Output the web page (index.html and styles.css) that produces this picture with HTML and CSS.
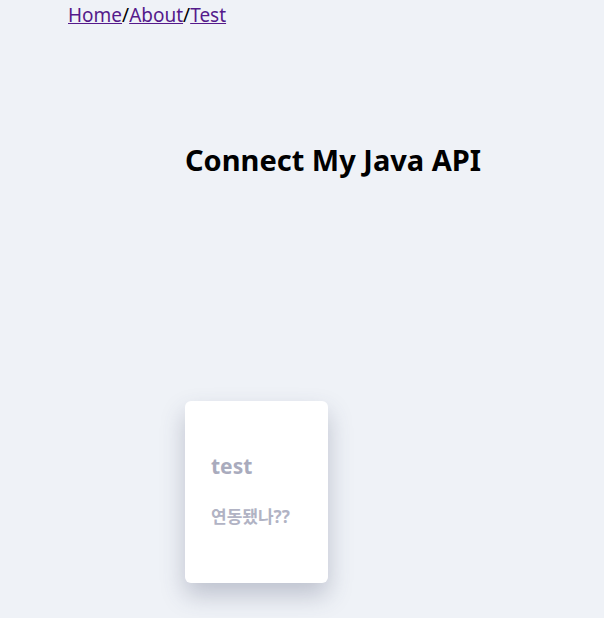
FILE: index.html
```html
<!DOCTYPE html>
<html lang="ko">
<head>
<meta charset="utf-8">
<link rel="stylesheet" href="styles.css">
</head>
<body>
<nav class="nav"><a href="#">Home</a>/<a href="#">About</a>/<a href="#">Test</a></nav>
<main class="main">
  <h1 class="title">Connect My Java API</h1>
  <div class="card">
    <h2 class="card-title">test</h2>
    <p class="card-text">연동됐나??</p>
  </div>
</main>
</body>
</html>
```

FILE: styles.css
```css
html {
  background: #eff2f7;
}
body {
  margin: 0;
  padding: 0;
  min-height: 100vh;
  font-family: "Noto Sans", "Noto Sans CJK KR", sans-serif;
  color: #000;
}
.nav {
  padding-left: 68px;
  font-size: 19px;
  line-height: 30px;
  color: #000;
}
.nav a {
  color: #551a8b;
  text-decoration: underline;
}
.main {
  padding-left: 185px;
}
.title {
  margin: 0;
  padding-top: 106px;
  font-size: 29px;
  font-weight: 700;
  line-height: 48px;
}
.card {
  margin-top: 217px;
  width: 143px;
  height: 182px;
  box-sizing: border-box;
  padding: 50px 26px 0;
  background: #fff;
  border-radius: 6px;
  box-shadow: 0 12px 24px rgba(60, 70, 100, 0.28);
}
.card-title {
  margin: 0;
  font-size: 21px;
  line-height: 30px;
  font-weight: 700;
  color: #a9abbd;
}
.card-text {
  margin: 24px 0 0;
  font-size: 17px;
  line-height: 24px;
  font-weight: 700;
  color: #b1b3c4;
}
```
